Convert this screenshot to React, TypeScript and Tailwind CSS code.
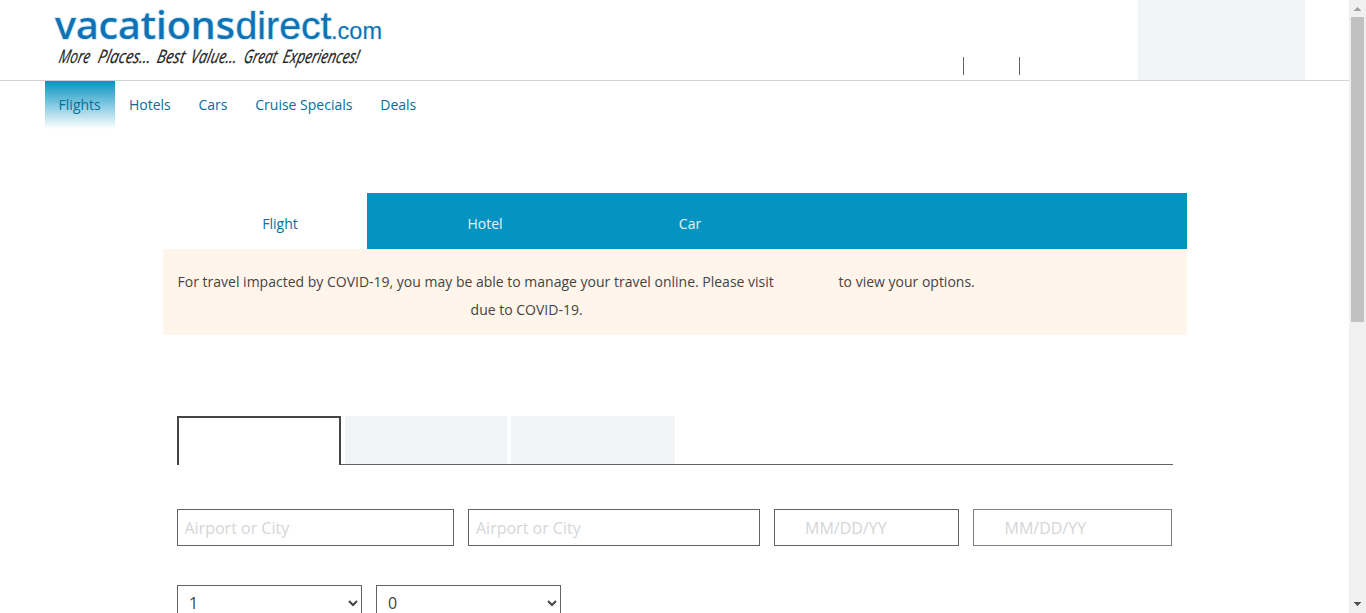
import React from "react";

const navItems = ["Flights", "Hotels", "Cars", "Cruise Specials", "Deals"];

const tagline = [
  { word: "More", x: 58, width: 31 },
  { word: "Places...", x: 97, width: 53 },
  { word: "Best", x: 156, width: 28 },
  { word: "Value...", x: 190, width: 46 },
  { word: "Great", x: 243, width: 33 },
  { word: "Experiences!", x: 282, width: 76 },
];

function Logo() {
  return (
    <svg width="400" height="80" viewBox="0 0 400 80" role="img" aria-label="vacationsdirect.com">
      <g fill="#0e72b5" stroke="#c5e9f7" strokeWidth="1.6" paintOrder="stroke">
        <text x="55" y="38.5" fontFamily="Noto Sans, sans-serif" fontWeight="500" fontSize="38" textLength="180" lengthAdjust="spacingAndGlyphs">vacations</text>
        <text x="235.5" y="38.5" fontFamily="Liberation Sans, sans-serif" fontSize="38" textLength="96" lengthAdjust="spacingAndGlyphs">direct</text>
        <text x="331" y="38.5" fontFamily="Liberation Sans, sans-serif" fontSize="24" strokeWidth="0.6" textLength="51" lengthAdjust="spacingAndGlyphs">.com</text>
      </g>
      <g fill="#222" stroke="#222" strokeWidth="0.2" fontFamily="Open Sans, sans-serif" fontStyle="italic" fontSize="18.5">
        {tagline.map((t) => (
          <text key={t.word} transform={`translate(${t.x} 63) skewX(-12)`} textLength={t.width} lengthAdjust="spacingAndGlyphs">{t.word}</text>
        ))}
      </g>
    </svg>
  );
}

function Scrollbar() {
  return (
    <div className="flex h-full w-[17px] shrink-0 flex-col items-center bg-[#f0f0f0]">
      <svg className="h-[17px] w-[17px] shrink-0" viewBox="0 0 17 17" shapeRendering="crispEdges">
        <path d="M8 7h1v1h1v1h1v1h1v1H5v-1h1V9h1V8h1z" fill="#a3a3a3" />
      </svg>
      <div className="h-[305px] w-[13px] bg-[#c1c1c1]" />
      <svg className="mt-auto h-[17px] w-[17px] shrink-0" viewBox="0 0 17 17" shapeRendering="crispEdges">
        <path d="M5 6h7v1h-1v1h-1v1H9v1H8V9H7V8H6V7H5z" fill="#505050" />
      </svg>
    </div>
  );
}

export default function App() {
  const field = "h-[37px] border border-[#626262] bg-white text-base outline-none placeholder:text-[#d4d6d8]";
  const select = "h-[36px] w-[184.6px] border border-[#626262] bg-white pr-2 pl-[7px] text-base text-[#444]";
  return (
    <div className="flex h-[613px] w-[1366px] overflow-hidden bg-white font-['Open_Sans',sans-serif] text-sm text-[#444]">
      <div className="h-full w-[1349px] overflow-hidden">
        <header className="flex h-[81px] border-b border-[#d3d3d3]">
          <Logo />
          <div className="ml-auto mt-[57px] mr-[118px] h-[18px] w-[57px] border-x border-[#626262]" />
          <div className="mr-11 h-20 w-[167px] bg-[#f0f4f7]" />
        </header>
        <nav className="flex h-12 pl-[45px] leading-[47px] text-[#056f98]">
          {navItems.map((item, i) => (
            <a key={item} className={i === 0 ? "w-[70px] bg-[linear-gradient(to_bottom,#0793c2,#ffffff)] pl-[13.6px]" : "px-[13.9px]"}>{item}</a>
          ))}
        </nav>
        <main className="ml-[163px] mt-16 w-[1024px]">
          <div className="flex h-14 bg-[#0793c2] pt-px text-center leading-[60px] text-[#e4f3f8]">
            <div className="-mt-px w-[204px] bg-white pl-[30px] pt-px text-[#056f98]">Flight</div>
            <div className="w-[205px] pl-[31px]">Hotel</div>
            <div className="w-[205px] pl-[31px]">Car</div>
          </div>
          <div className="h-[86px] bg-[#fff5eb] pr-[14px] pl-[14.6px] pt-[19px] leading-7">
            <p className="flex">
              <span className="w-[661px]">For travel impacted by COVID-19, you may be able to manage your travel online. Please visit</span>
              <span>to view your options.</span>
            </p>
            <p className="pl-[293px]">due to COVID-19.</p>
          </div>
          <div className="ml-[14px] mt-[81px] flex h-[49px] w-[996px]">
            <div className="w-[164px] border-x-2 border-t-2 border-[#444]" />
            <div className="flex grow gap-1 border-b border-[#626262] pl-1">
              <div className="w-[162px] bg-[#f0f4f7]" />
              <div className="w-[164px] bg-[#f0f4f7]" />
            </div>
          </div>
          <div className="ml-[14px] mt-11 flex gap-[14px]">
            <input className={`${field} w-[277px] px-[6.5px]`} placeholder="Airport or City" />
            <input className={`${field} w-[292px] px-[7px]`} placeholder="Airport or City" />
            <input className={`${field} w-[185px] pl-[30px]`} placeholder="MM/DD/YY" />
            <input className="h-[37px] w-[199px] border border-[#808080] bg-white pl-[30.5px] text-base outline-none placeholder:text-[#d4d6d8]" placeholder="MM/DD/YY" />
          </div>
          <div className="ml-[14px] mt-[39px] flex gap-[14.4px]">
            <select className={select} defaultValue="1"><option>1</option></select>
            <select className={select} defaultValue="0"><option>0</option></select>
          </div>
        </main>
      </div>
      <Scrollbar />
    </div>
  );
}
